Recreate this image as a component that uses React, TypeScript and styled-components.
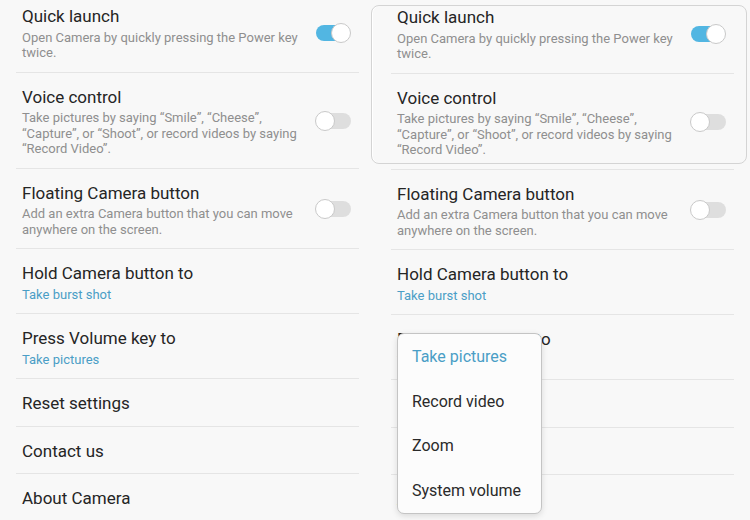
import styled, { createGlobalStyle } from 'styled-components';

// two phone captures side by side: plain settings list / same list with the volume-key menu open

const GlobalStyle = createGlobalStyle`
  html, body {
    margin: 0;
    padding: 0;
    background: #f8f8f8;
  }
  body {
    font-family: Roboto, "Noto Sans", "Liberation Sans", sans-serif;
    -webkit-font-smoothing: antialiased;
  }
`;

const Screen = styled.div`
  display: grid;
  grid-template-columns: 375px 375px;
  width: 750px;
  height: 520px;
  overflow: hidden;
  background: #f8f8f8;
`;

const Panel = styled.div<{ $scroll: number }>`
  position: relative;
  display: flex;
  flex-direction: column;
  margin-top: ${(p) => p.$scroll}px;
`;

const Highlight = styled.div`
  position: absolute;
  top: 12px;
  left: -4px;
  right: 3px;
  height: 157px;
  border: 1px solid #d4d4d4;
  border-radius: 8px;
  box-shadow: inset 1px 0 0 #ffffff;
  pointer-events: none;
`;

const Row = styled.div`
  position: relative;
  display: flex;
  align-items: center;
  gap: 12px;
  margin: 0 16px;
  padding: 14px 8px 12.5px 6px;
  border-bottom: 1px solid #e5e5e5;
`;

const Texts = styled.div`
  flex: 1;
  min-width: 0;
`;

const Title = styled.div`
  font-size: 17px;
  line-height: 20px;
  color: #252525;
`;

const Sub = styled.div<{ $accent?: boolean }>`
  margin: 3.5px 0 -1.5px;
  font-size: 13px;
  line-height: 15.5px;
  color: ${(p) => (p.$accent ? '#4a9ec6' : '#8f8f8f')};
`;

const Track = styled.div<{ $on: boolean }>`
  position: relative;
  flex: none;
  width: 34px;
  height: 16px;
  border-radius: 8px;
  background: ${(p) => (p.$on ? '#52b6e2' : '#dedede')};
  margin-left: ${(p) => (p.$on ? '0' : '2px')};
  margin-right: ${(p) => (p.$on ? '1px' : '0')};
`;

const Thumb = styled.div<{ $on: boolean }>`
  position: absolute;
  top: -2px;
  ${(p) => (p.$on ? 'right: -1px;' : 'left: -2px;')}
  width: 18px;
  height: 18px;
  border-radius: 50%;
  background: #ffffff;
  border: 1px solid #c9c9c9;
`;

const Menu = styled.div`
  position: absolute;
  top: 18px;
  left: 6px;
  width: 143px;
  background: #fcfcfc;
  border: 1px solid #c4c4c4;
  border-radius: 7px;
  box-shadow: 0 2px 6px rgba(0, 0, 0, 0.12);
  z-index: 2;
`;

const MenuItem = styled.div<{ $active?: boolean }>`
  height: 44.75px;
  display: flex;
  align-items: center;
  padding-left: 14px;
  font-size: 16px;
  color: ${(p) => (p.$active ? '#4a9ec6' : '#2a2a2a')};
`;

interface Setting {
  title: string;
  sub?: string;
  accent?: boolean;
  toggle?: boolean;
}

const settings: Setting[] = [
  {
    title: 'Quick launch',
    sub: 'Open Camera by quickly pressing the Power key twice.',
    toggle: true,
  },
  {
    title: 'Voice control',
    sub: 'Take pictures by saying “Smile”, “Cheese”, “Capture”, or “Shoot”, or record videos by saying “Record Video”.',
    toggle: false,
  },
  {
    title: 'Floating Camera button',
    sub: 'Add an extra Camera button that you can move anywhere on the screen.',
    toggle: false,
  },
  { title: 'Hold Camera button to', sub: 'Take burst shot', accent: true },
  { title: 'Press Volume key to', sub: 'Take pictures', accent: true },
  { title: 'Reset settings' },
  { title: 'Contact us' },
  { title: 'About Camera' },
];

const volumeOptions = ['Take pictures', 'Record video', 'Zoom', 'System volume'];

function SettingsList({ scroll, menuOpen }: { scroll: number; menuOpen?: boolean }) {
  return (
    <Panel $scroll={scroll}>
      {menuOpen && <Highlight />}
      {settings.map((s) => (
        <Row key={s.title}>
          <Texts>
            <Title>{s.title}</Title>
            {s.sub && <Sub $accent={s.accent}>{s.sub}</Sub>}
          </Texts>
          {s.toggle !== undefined && (
            <Track $on={s.toggle}>
              <Thumb $on={s.toggle} />
            </Track>
          )}
          {menuOpen && s.title === 'Press Volume key to' && (
            <Menu>
              {volumeOptions.map((o, i) => (
                <MenuItem key={o} $active={i === 0}>
                  {o}
                </MenuItem>
              ))}
            </Menu>
          )}
        </Row>
      ))}
    </Panel>
  );
}

export default function App() {
  return (
    <>
      <GlobalStyle />
      <Screen>
        <SettingsList scroll={-8} />
        <SettingsList scroll={-7} menuOpen />
      </Screen>
    </>
  );
}
